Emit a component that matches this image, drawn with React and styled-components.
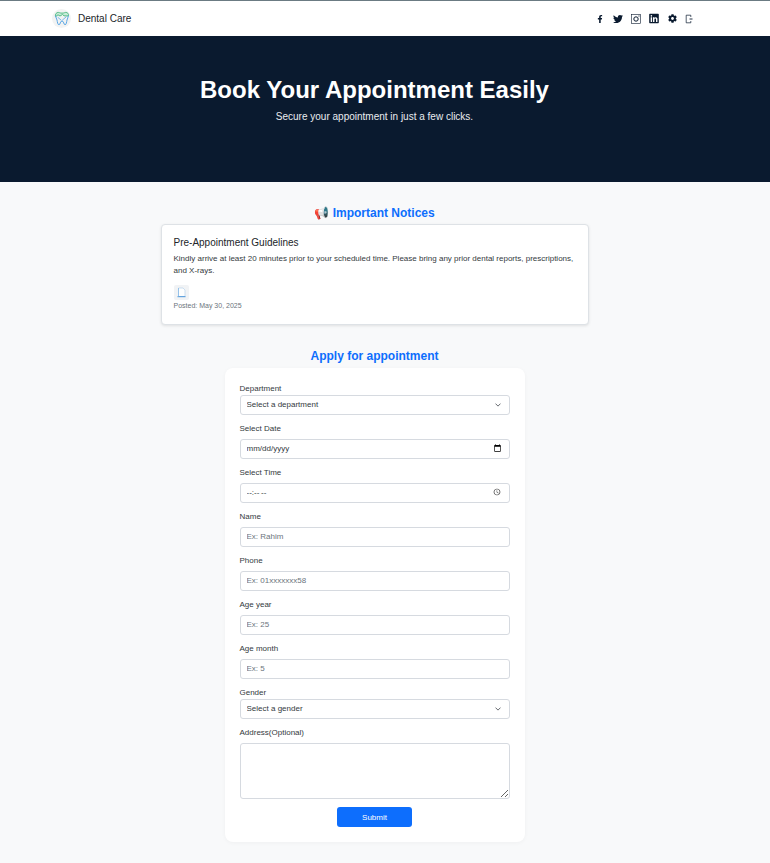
import React from "react";
import styled, { createGlobalStyle } from "styled-components";
import { FaFacebookF, FaTwitter, FaLinkedin, FaCog } from "react-icons/fa";

const Global = createGlobalStyle`
  * { box-sizing: border-box; }
  html, body { margin: 0; padding: 0; background: #f8f9fa; }
  body { font-family: "Liberation Sans", Arial, sans-serif; color: #212529; }
`;

const Page = styled.div`
  min-height: 863px;
  display: flex;
  flex-direction: column;
  align-items: stretch;
`;
const Nav = styled.nav`
  height: 36px;
  background: #fff;
  border-top: 1px solid #6b7b83;
  padding: 0 75px 0 52px;
  display: flex;
  align-items: center;
  justify-content: space-between;
`;
const Brand = styled.div`
  display: flex;
  align-items: center;
  gap: 7px;
  font-size: 10px;
  color: #212529;
`;
const LogoDisc = styled.div`
  width: 19px;
  height: 19px;
  border-radius: 50%;
  background: #f2f3f3;
  display: flex;
  align-items: center;
  justify-content: center;
`;
const Socials = styled.div`
  display: flex;
  align-items: center;
  gap: 8px;
  color: #0a1a2f;
`;
const IconSlot = styled.span`
  width: 10px;
  height: 10px;
  display: flex;
  align-items: center;
  justify-content: center;
  font-size: ${(p) => p.$size || 10}px;
`;
const Hero = styled.header`
  height: 146px;
  background: #0a1a2f;
  color: #fff;
  text-align: center;
  padding: 39px 21px 0 0;
`;
const HeroTitle = styled.h1`
  margin: 0;
  font-size: 24px;
  line-height: 30px;
  font-weight: 700;
`;
const HeroSub = styled.p`
  margin: 6px 0 0;
  font-size: 10px;
  line-height: 12px;
  color: #e9ecef;
`;
const Main = styled.main`
  display: flex;
  flex-direction: column;
  align-items: center;
  padding: 24px 21px 0 0;
`;
const SectionTitle = styled.h2`
  margin: 0;
  font-size: 12px;
  line-height: 14px;
  font-weight: 700;
  color: #0d6efd;
  text-align: center;
`;
const NoticeCard = styled.article`
  width: 428px;
  height: 101px;
  margin: 4px 0 24px;
  padding: 12px 12px 0;
  background: #fff;
  border: 1px solid #dee2e6;
  border-radius: 4px;
  box-shadow: 0 1px 3px rgba(0, 0, 0, 0.1);
`;
const NoticeTitle = styled.h3`
  margin: 0 0 4px;
  font-size: 10px;
  line-height: 12px;
  font-weight: 400;
  color: #212529;
`;
const NoticeBody = styled.p`
  margin: 0 0 8px;
  font-size: 8px;
  line-height: 12px;
  color: #343a40;
`;
const Thumb = styled.div`
  width: 15px;
  height: 15px;
  background: #f1f3f5;
  border-radius: 2px;
  display: flex;
  align-items: center;
  justify-content: center;
`;
const Posted = styled.div`
  margin-top: 1px;
  font-size: 7px;
  line-height: 9px;
  color: #6c757d;
`;
const FormCard = styled.form`
  width: 300px;
  margin: 5px 0 21px;
  padding: 15px;
  background: #fff;
  border-radius: 8px;
  box-shadow: 0 1px 4px rgba(0, 0, 0, 0.04);
`;
const Field = styled.div`
  margin-bottom: 8px;
`;
const Label = styled.label`
  display: block;
  font-size: 8px;
  line-height: 12px;
  color: #343a40;
  margin-bottom: ${(p) => (p.$tight ? 0 : 4)}px;
`;
const controlBase = `
  display: block;
  width: 100%;
  height: 20px;
  padding: 0 6px 2px;
  font-family: "Liberation Sans", Arial, sans-serif;
  font-size: 8px;
  color: #343a40;
  background-color: #fff;
  border: 1px solid #d6dae0;
  border-radius: 3px;
  outline: none;
`;
const Select = styled.select`
  ${controlBase}
  appearance: none;
  background-image: url("data:image/svg+xml,%3csvg xmlns='http://www.w3.org/2000/svg' viewBox='0 0 16 16'%3e%3cpath fill='none' stroke='%23343a40' stroke-linecap='round' stroke-linejoin='round' stroke-width='2' d='m2 5 6 6 6-6'/%3e%3c/svg%3e");
  background-repeat: no-repeat;
  background-position: right 8px center;
  background-size: 6px 6px;
`;
const Input = styled.input`
  ${controlBase}
  &::placeholder { color: #6c757d; opacity: 1; }
  &::-webkit-calendar-picker-indicator { width: 9px; height: 9px; margin: 0 1px 0 0; padding: 0; }
  &[type="time"]::-webkit-calendar-picker-indicator { width: 8px; height: 8px; margin-right: 2px; opacity: .8; }
  &::-webkit-datetime-edit { padding: 0; }
  &::-webkit-datetime-edit-fields-wrapper { padding: 0; }
  &::-webkit-datetime-edit-text { padding: 0; }
  &::-webkit-datetime-edit-month-field,
  &::-webkit-datetime-edit-day-field,
  &::-webkit-datetime-edit-year-field,
  &::-webkit-datetime-edit-hour-field,
  &::-webkit-datetime-edit-minute-field,
  &::-webkit-datetime-edit-ampm-field { padding: 0; }
`;
const TextArea = styled.textarea`
  ${controlBase}
  height: 56px;
  padding: 4px 6px;
  resize: vertical;
`;
const SubmitRow = styled.div`
  display: flex;
  justify-content: center;
`;
const Submit = styled.button`
  width: 75px;
  height: 20px;
  border: 0;
  border-radius: 3px;
  background: #0d6efd;
  color: #fff;
  font-family: "Liberation Sans", Arial, sans-serif;
  font-size: 8px;
  padding: 0;
`;

const ToothLogo = () => (
  <svg width="16" height="15" viewBox="0 0 16 15" fill="none" strokeLinecap="round" strokeLinejoin="round">
    <path d="M1.500 3.500C2 1.500 4 1 5.500 1.700 7 2.300 9 2.300 10.500 1.700 12 1 14 1.500 14.500 3.500L14.300 5 10 4.800 8.500 3.500 6 5 4 3.800 1.800 5.500Z" fill="#c9ecd9" stroke="#54bd86" strokeWidth="1" />
    <path d="M1.600 5C1.700 6.500 2.600 7.300 3 9 3.400 11 3.700 13.800 5 13.800 6.400 13.800 6 10 8 10 10 10 9.600 13.800 11 13.800 12.300 13.800 12.600 11 13 9 13.400 7.300 14.300 6.500 14.400 5" stroke="#5aa7e6" strokeWidth="1" />
    <path d="M4 6.500 7 9M12 6 8.500 9" stroke="#5aa7e6" strokeWidth=".8" />
  </svg>
);
const InstaIcon = () => (
  <svg width="10" height="10" viewBox="0 0 10 10" fill="none" stroke="#0a1a2f">
    <rect x=".4" y=".4" width="9.200" height="9.200" strokeWidth=".6" />
    <circle cx="5" cy="5" r="2.200" strokeWidth="1" />
    <circle cx="8" cy="2" r=".4" fill="#0a1a2f" strokeWidth=".3" />
  </svg>
);
const LogoutIcon = () => (
  <svg width="10" height="10" viewBox="0 0 10 10" fill="none" stroke="#0a1a2f" strokeWidth=".7">
    <path d="M5.800 3V1.200H1.200v7.600h4.600V7" />
    <path d="M4.500 5H7.500" strokeWidth=".9" />
  </svg>
);
const DocIcon = () => (
  <svg width="11" height="11" viewBox="0 0 11 11" fill="none">
    <path d="M2.500 1h4.500l2 2v6.500h-6.500z" fill="#fdfefe" stroke="#b7d3ec" strokeWidth=".7" />
    <path d="M1.500 9.700h8" stroke="#3f8fd8" strokeWidth=".9" />
    <path d="M2.500 1v8.500" stroke="#7fb6e6" strokeWidth=".7" />
  </svg>
);

const textFields = [
  ["Name", "text", "Ex: Rahim"],
  ["Phone", "tel", "Ex: 01xxxxxxx58"],
  ["Age year", "text", "Ex: 25"],
  ["Age month", "text", "Ex: 5"],
];

export default function App() {
  return (
    <Page>
      <Global />
      <Nav>
        <Brand>
          <LogoDisc><ToothLogo /></LogoDisc>
          Dental Care
        </Brand>
        <Socials>
          <IconSlot $size={8}><FaFacebookF /></IconSlot>
          <IconSlot><FaTwitter /></IconSlot>
          <IconSlot><InstaIcon /></IconSlot>
          <IconSlot $size={11}><FaLinkedin /></IconSlot>
          <IconSlot $size={9}><FaCog /></IconSlot>
          <IconSlot><LogoutIcon /></IconSlot>
        </Socials>
      </Nav>
      <Hero>
        <HeroTitle>Book Your Appointment Easily</HeroTitle>
        <HeroSub>Secure your appointment in just a few clicks.</HeroSub>
      </Hero>
      <Main>
        <SectionTitle>📢 Important Notices</SectionTitle>
        <NoticeCard>
          <NoticeTitle>Pre-Appointment Guidelines</NoticeTitle>
          <NoticeBody>
            Kindly arrive at least 20 minutes prior to your scheduled time. Please bring any prior dental reports, prescriptions, and X-rays.
          </NoticeBody>
          <Thumb><DocIcon /></Thumb>
          <Posted>Posted: May 30, 2025</Posted>
        </NoticeCard>
        <SectionTitle>Apply for appointment</SectionTitle>
        <FormCard>
          <Field>
            <Label $tight>Department</Label>
            <Select defaultValue=""><option value="">Select a department</option></Select>
          </Field>
          <Field>
            <Label>Select Date</Label>
            <Input type="date" />
          </Field>
          <Field>
            <Label>Select Time</Label>
            <Input type="time" />
          </Field>
          {textFields.map(([label, type, ph]) => (
            <Field key={label}>
              <Label>{label}</Label>
              <Input type={type} placeholder={ph} />
            </Field>
          ))}
          <Field>
            <Label $tight>Gender</Label>
            <Select defaultValue=""><option value="">Select a gender</option></Select>
          </Field>
          <Field>
            <Label>Address(Optional)</Label>
            <TextArea />
          </Field>
          <SubmitRow><Submit type="button">Submit</Submit></SubmitRow>
        </FormCard>
      </Main>
    </Page>
  );
}
